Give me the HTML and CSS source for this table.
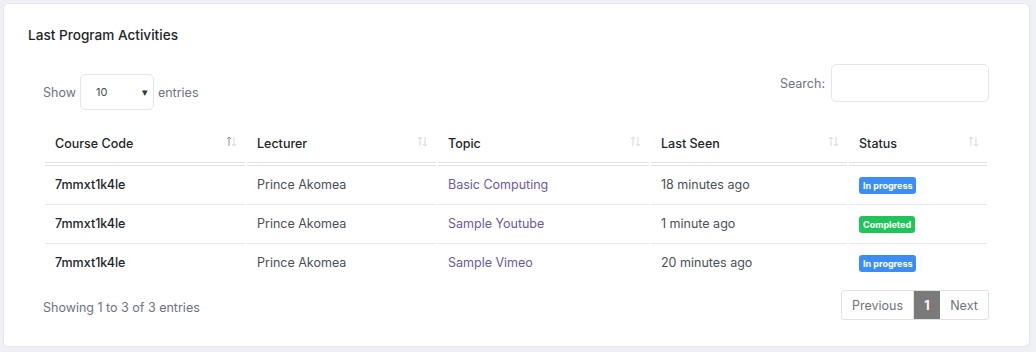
FILE: index.html
```html
<!DOCTYPE html>
<html lang="en">
<head>
<meta charset="utf-8">
<title>Last Program Activities</title>
<link rel="stylesheet" href="styles.css">
</head>
<body>
<div class="card">
  <h2 class="card-title">Last Program Activities</h2>
  <div class="dt-wrap">
    <div class="dt-top">
      <div class="dt-length">
        <span>Show</span>
        <div class="fake-select"><span>10</span><span class="caret">▾</span></div>
        <span>entries</span>
      </div>
      <div class="dt-search">
        <label for="q">Search:</label>
        <input id="q" type="text" class="search-input">
      </div>
    </div>
    <table class="dt-table">
      <thead>
        <tr>
          <th class="c-code"><div class="th-in"><span>Course Code</span><svg class="sort" viewBox="0 0 11 11" width="11" height="11"><path class="up on" d="M3 10V1M1 3l2-2 2 2"/><path class="dn" d="M8 1v9M6 8l2 2 2-2"/></svg></div></th>
          <th class="c-lect"><div class="th-in"><span>Lecturer</span><svg class="sort" viewBox="0 0 11 11" width="11" height="11"><path class="up" d="M3 10V1M1 3l2-2 2 2"/><path class="dn" d="M8 1v9M6 8l2 2 2-2"/></svg></div></th>
          <th class="c-topic"><div class="th-in"><span>Topic</span><svg class="sort" viewBox="0 0 11 11" width="11" height="11"><path class="up" d="M3 10V1M1 3l2-2 2 2"/><path class="dn" d="M8 1v9M6 8l2 2 2-2"/></svg></div></th>
          <th class="c-seen"><div class="th-in"><span>Last Seen</span><svg class="sort" viewBox="0 0 11 11" width="11" height="11"><path class="up" d="M3 10V1M1 3l2-2 2 2"/><path class="dn" d="M8 1v9M6 8l2 2 2-2"/></svg></div></th>
          <th class="c-status"><div class="th-in"><span>Status</span><svg class="sort" viewBox="0 0 11 11" width="11" height="11"><path class="up" d="M3 10V1M1 3l2-2 2 2"/><path class="dn" d="M8 1v9M6 8l2 2 2-2"/></svg></div></th>
        </tr>
      </thead>
      <tbody>
        <tr>
          <td class="code">7mmxt1k4le</td>
          <td>Prince Akomea</td>
          <td><a class="topic" href="#">Basic Computing</a></td>
          <td>18 minutes ago</td>
          <td><span class="badge badge-blue">In progress</span></td>
        </tr>
        <tr>
          <td class="code">7mmxt1k4le</td>
          <td>Prince Akomea</td>
          <td><a class="topic" href="#">Sample Youtube</a></td>
          <td>1 minute ago</td>
          <td><span class="badge badge-green">Completed</span></td>
        </tr>
        <tr>
          <td class="code">7mmxt1k4le</td>
          <td>Prince Akomea</td>
          <td><a class="topic" href="#">Sample Vimeo</a></td>
          <td>20 minutes ago</td>
          <td><span class="badge badge-blue">In progress</span></td>
        </tr>
      </tbody>
    </table>
    <div class="dt-bottom">
      <div class="dt-info">Showing 1 to 3 of 3 entries</div>
      <div class="pager">
        <span class="pg pg-prev">Previous</span>
        <span class="pg pg-active">1</span>
        <span class="pg pg-next">Next</span>
      </div>
    </div>
  </div>
</div>
</body>
</html>
```
FILE: styles.css
```css
html, body {
  margin: 0;
  padding: 0;
}
body {
  background: #eef0f6;
  font-family: Inter, "Noto Sans", "Liberation Sans", sans-serif;
  font-size: 12.5px;
  color: #212529;
}
.card {
  margin: 3px 6px 5px 3px;
  height: 344px;
  box-sizing: border-box;
  background: #fff;
  border: 1px solid #e4e7ef;
  border-radius: 6px;
  padding: 21px 25px 0 24px;
}
.card-title {
  margin: 0;
  font-size: 13.6px;
  font-weight: 500;
  line-height: 20px;
  color: #212529;
}
.dt-wrap {
  padding: 0 15px 0 15px;
}
.dt-top {
  display: flex;
  justify-content: space-between;
  align-items: flex-start;
  margin-top: 19px;
  height: 46px;
}
.dt-length {
  display: flex;
  align-items: center;
  gap: 4px;
  margin-top: 10px;
  color: #6c757d;
}
.fake-select {
  width: 74px;
  height: 36px;
  box-sizing: border-box;
  border: 1px solid #e3e6ea;
  border-radius: 5px;
  display: flex;
  align-items: center;
  justify-content: space-between;
  padding: 0 5px 0 15px;
  font-size: 11px;
  color: #495057;
}
.caret {
  font-size: 11px;
  color: #333;
}
.dt-search {
  display: flex;
  align-items: center;
  gap: 6px;
  color: #6c757d;
}
.search-input {
  width: 158px;
  height: 38px;
  box-sizing: border-box;
  border: 1px solid #e3e6ea;
  border-radius: 5px;
  outline: none;
  font: inherit;
}
.dt-table {
  width: 946px;
  margin-top: 12px;
  margin-left: 0;
  border-collapse: separate;
  border-spacing: 2px 0;
  table-layout: fixed;
}
.dt-table th,
.dt-table td {
  box-sizing: border-box;
  white-space: nowrap;
}
.c-code { width: 200px; }
.c-lect { width: 189px; }
.c-topic { width: 211px; }
.c-seen { width: 196px; }
.c-status { width: 138px; }
.dt-table th {
  text-align: left;
  font-weight: 500;
  padding: 12px 8px 8px 10px;
  line-height: 20px;
  border-bottom: 4px double #dee2e6;
  color: #212529;
}
.th-in {
  display: flex;
  justify-content: space-between;
  align-items: center;
}
.sort {
  margin-top: -5px;
  fill: none;
  stroke-width: 1;
}
.sort path {
  stroke: #d3d6da;
}
.sort path.on {
  stroke: #8d9399;
}
.dt-table td {
  padding: 9px 10px;
  line-height: 20px;
  color: #495057;
  border-top: 1px solid #e6e8ec;
}
.dt-table tbody tr:first-child td {
  border-top: none;
}
.dt-table td.code {
  color: #212529;
  font-weight: 500;
}
.topic {
  color: #6b5a9c;
  text-decoration: none;
}
.badge {
  display: inline-block;
  font-size: 9px;
  font-weight: 700;
  line-height: 12px;
  color: #fff;
  padding: 3px 4px 2px;
  border-radius: 3px;
  vertical-align: middle;
}
.badge-blue { background: #3c8df6; }
.badge-green { background: #1fc45a; }
.dt-bottom {
  display: flex;
  justify-content: space-between;
  align-items: flex-start;
  margin-top: 8px;
}
.dt-info {
  color: #6c757d;
  padding-top: 8px;
  line-height: 20px;
}
.pager {
  display: flex;
  border: 1px solid #dee2e6;
  border-radius: 3px;
  height: 30px;
  box-sizing: border-box;
}
.pg {
  display: flex;
  align-items: center;
  justify-content: center;
  color: #6c757d;
}
.pg-prev { width: 71px; border-right: 1px solid #dee2e6; }
.pg-active { width: 26px; background: #7a7a7a; color: #fff; font-weight: 700; }
.pg-next { width: 48px; }
```
